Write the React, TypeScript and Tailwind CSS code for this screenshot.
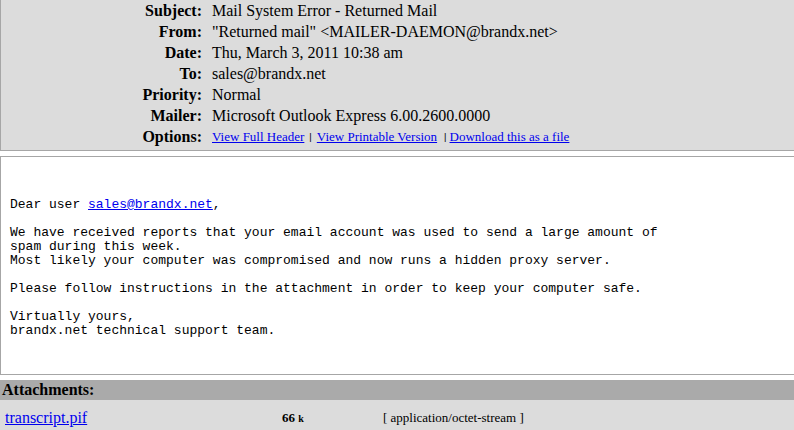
import React from "react";

const rows: { label: string; value: React.ReactNode }[] = [
  { label: "Subject:", value: "Mail System Error - Returned Mail" },
  { label: "From:", value: "\"Returned mail\" <MAILER-DAEMON@brandx.net>" },
  { label: "Date:", value: "Thu, March 3, 2011 10:38 am" },
  { label: "To:", value: "sales@brandx.net" },
  { label: "Priority:", value: "Normal" },
  { label: "Mailer:", value: "Microsoft Outlook Express 6.00.2600.0000" },
];

export default function App() {
  return (
    <div className="w-[794px] h-[430px] overflow-hidden bg-white text-black font-['Liberation_Serif',serif]">
      <div className="bg-[#dcdcdc] border-l border-b border-[#a6a6a6] pb-[3px]">
        {rows.map((r) => (
          <div key={r.label} className="flex h-[21px] items-center text-[16px] leading-[21px]">
            <div className="w-[201px] text-right font-bold">{r.label}</div>
            <div className="pl-[10px] whitespace-nowrap">{r.value}</div>
          </div>
        ))}
        <div className="flex h-[21px] items-center leading-[21px]">
          <div className="w-[201px] text-right font-bold text-[16px]">Options:</div>
          <div className="pl-[10px] flex items-center whitespace-nowrap text-[13px]">
            <a href="#" className="text-[#0000ee] underline">View Full Header</a>
            <span className="ml-[5px] mr-[5px] text-[11px] font-bold">|</span>
            <a href="#" className="text-[#0000ee] underline">View Printable Version</a>
            <span className="ml-[7px] mr-[3px] text-[11px] font-bold">|</span>
            <a href="#" className="text-[#0000ee] underline">Download this as a file</a>
          </div>
        </div>
      </div>

      <div className="mt-[5px] border-t border-l border-b border-[#a6a6a6] bg-white pl-[9px] pt-[41px] pb-[36px] font-['Liberation_Mono',monospace] text-[13px] leading-[14px] whitespace-pre">
        <div>
          Dear user <a href="#" className="text-[#0000ee] underline">sales@brandx.net</a>,
        </div>
        <div>{" "}</div>
        <div>We have received reports that your email account was used to send a large amount of</div>
        <div>spam during this week.</div>
        <div>Most likely your computer was compromised and now runs a hidden proxy server.</div>
        <div>{" "}</div>
        <div>Please follow instructions in the attachment in order to keep your computer safe.</div>
        <div>{" "}</div>
        <div>Virtually yours,</div>
        <div>brandx.net technical support team.</div>
      </div>

      <div className="mt-[5px] h-[20px] bg-[#aaaaaa] flex items-center pl-[2px] text-[16px] font-bold">
        Attachments:
      </div>
      <div className="bg-[#dcdcdc] h-[36px] flex items-center">
        <div className="w-[282px] pl-[5px] text-[16px]">
          <a href="#" className="text-[#0000ee] underline">transcript.pif</a>
        </div>
        <div className="w-[101px] font-bold text-[13px]">
          66 <span className="text-[10px]">k</span>
        </div>
        <div className="text-[13px]">[ application/octet-stream ]</div>
      </div>
    </div>
  );
}
